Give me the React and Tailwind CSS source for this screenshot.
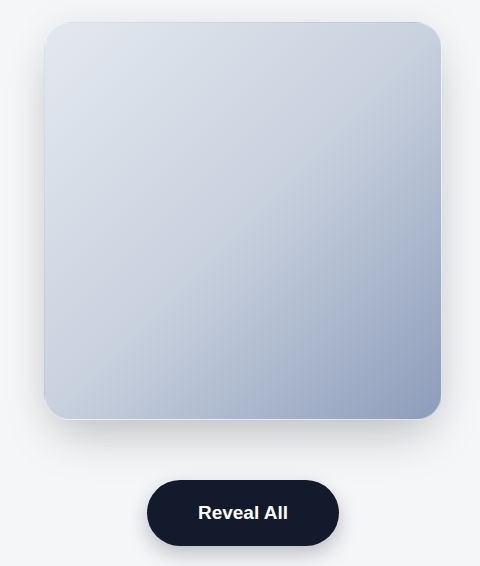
import React from 'react';

export default function App() {
  return (
    <div className="min-h-[566px] w-full bg-[#f5f6f8] flex flex-col items-center pt-[22px] pl-[6px]" style={{ fontFamily: '"Liberation Sans", Arial, sans-serif' }}>
      <div className="w-[398px] h-[398px] rounded-[26px] bg-gradient-to-br from-[#e4e9f0] via-[#c8d1de] to-[#8d9cba] border border-white/40 shadow-[0_24px_50px_-12px_rgba(0,0,0,0.22),0_0_40px_rgba(0,0,0,0.05)]" />
      <button className="mt-[60px] w-[192px] h-[66px] rounded-full bg-[#131a2b] text-white font-bold text-[19px] shadow-[0_8px_20px_rgba(15,23,42,0.25)]">
        Reveal All
      </button>
    </div>
  );
}
